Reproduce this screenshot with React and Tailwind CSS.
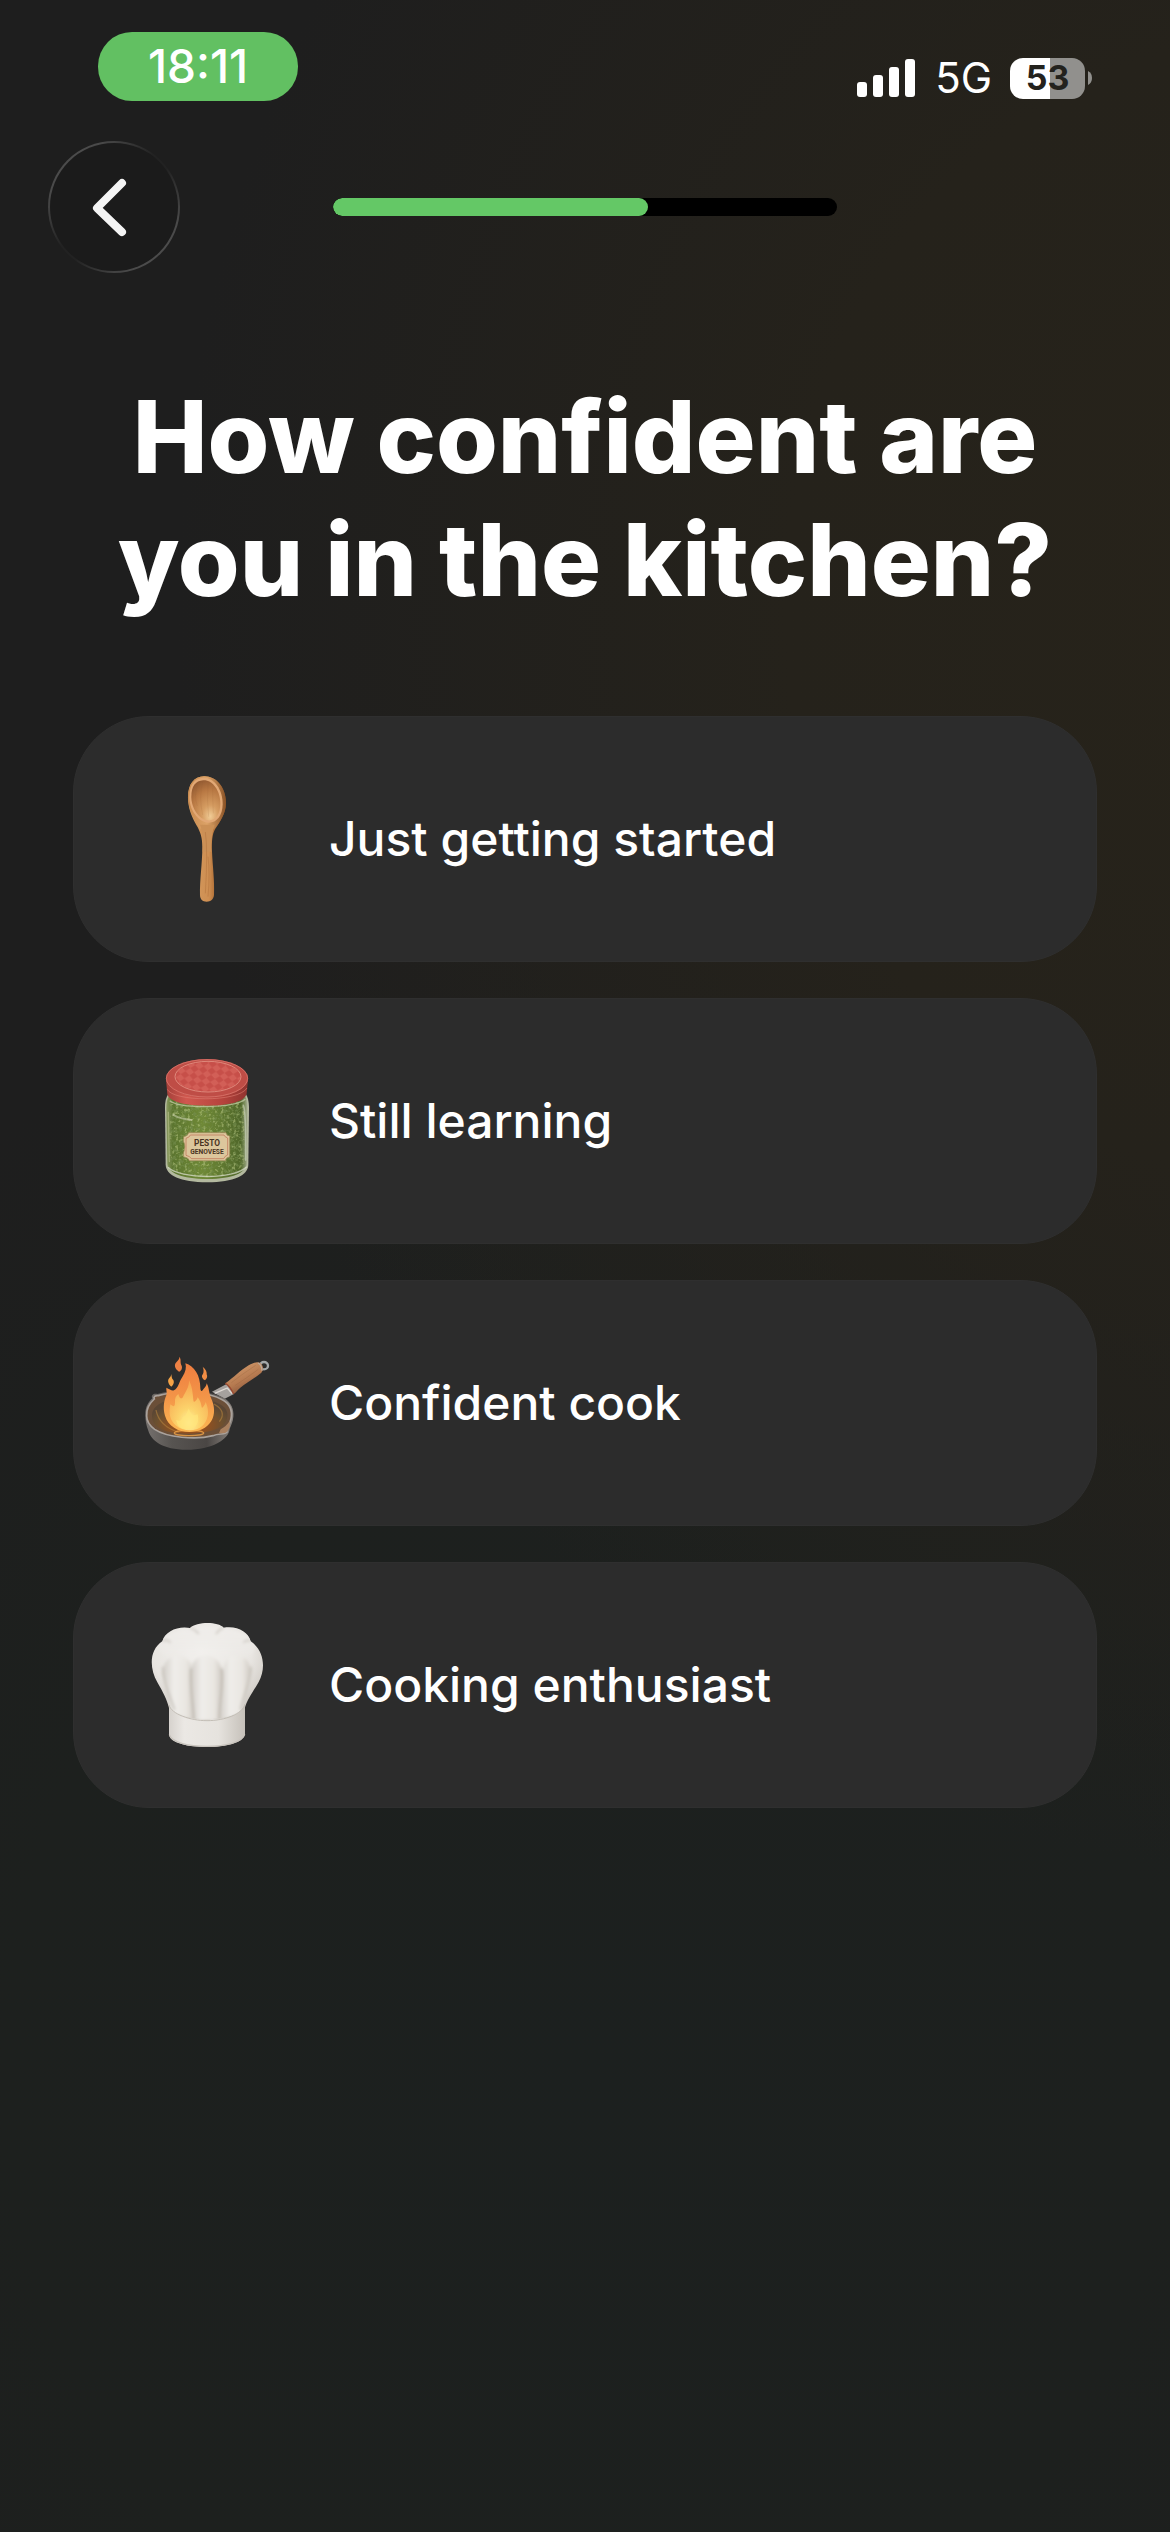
import React from "react";

function Spoon() {
  return (
    <svg viewBox="243 219 396 396" className="size-[132px] shrink-0" aria-hidden="true">
      <defs>
        <linearGradient id="sp-body" x1="0" x2="1">
          <stop offset="0" stopColor="#c98a4e" />
          <stop offset="0.5" stopColor="#dca368" />
          <stop offset="1" stopColor="#8a5226" />
        </linearGradient>
        <linearGradient id="sp-handle" x1="0" x2="1">
          <stop offset="0" stopColor="#d39a5f" />
          <stop offset="0.55" stopColor="#cf8f52" />
          <stop offset="0.75" stopColor="#a9672f" />
          <stop offset="1" stopColor="#7d471d" />
        </linearGradient>
        <radialGradient id="sp-bowl" cx="0.65" cy="0.9" r="0.95">
          <stop offset="0" stopColor="#f0cb95" />
          <stop offset="0.3" stopColor="#d59c61" />
          <stop offset="0.7" stopColor="#b87843" />
          <stop offset="1" stopColor="#935a31" />
        </radialGradient>
      </defs>
      <path d="M432 229C468 228 497 262 498 308C498 340 479 366 466 386C456 403 455 425 456 455C458 500 464 540 462 585C461 598 452 605 440 605C428 605 420 598 420 585C419 540 427 490 427 440C427 415 422 396 409 375C396 352 384 326 384 292C384 252 402 230 432 229Z" fill="url(#sp-handle)" />
      <path d="M432 229C468 228 497 262 498 308C498 340 479 366 464 386L420 386C404 366 384 326 384 292C384 252 402 230 432 229Z" fill="url(#sp-body)" />
      <path d="M420 374L464 374C455 400 453 425 454 455L428 455C429 425 429 396 420 374Z" fill="#cb9056" />
      <path d="M430 233C462 232 488 268 488 312C488 348 468 370 444 368C412 364 388 328 388 290C388 254 404 234 430 233Z" fill="#e2a875" />
      <path d="M430 241C458 240 481 272 481 312C481 343 465 363 444 361C416 358 394 324 394 290C394 260 406 242 430 241Z" fill="url(#sp-bowl)" />
      <path d="M414 250Q400 285 412 318M428 246Q416 290 428 345M444 250Q440 300 446 350M458 264Q458 300 460 340" stroke="#8f562e" strokeWidth="1.5" opacity="0.25" fill="none" />
      <path d="M436 396Q444 450 436 580M444 470Q450 520 444 590" stroke="#a3642f" strokeWidth="2" opacity="0.5" fill="none" />
    </svg>
  );
}

function PestoJar() {
  return (
    <svg viewBox="33 75 396 396" className="size-[132px] shrink-0" aria-hidden="true">
      <defs>
        <linearGradient id="jar-body" x1="0" x2="1">
          <stop offset="0" stopColor="#8b9a62" />
          <stop offset="0.08" stopColor="#5b752f" />
          <stop offset="0.45" stopColor="#6f8936" />
          <stop offset="0.92" stopColor="#4f672a" />
          <stop offset="1" stopColor="#a2ab8b" />
        </linearGradient>
        <linearGradient id="jar-rim" x1="0" x2="1">
          <stop offset="0" stopColor="#a5403a" />
          <stop offset="0.25" stopColor="#d0584f" />
          <stop offset="0.7" stopColor="#b5433c" />
          <stop offset="1" stopColor="#8f332f" />
        </linearGradient>
        <pattern id="jar-check" width="26" height="22" patternUnits="userSpaceOnUse" patternTransform="rotate(8)">
          <path d="M13 0L26 11L13 22L0 11Z" fill="#dd6f66" opacity="0.5" />
        </pattern>
        <filter id="jar-light">
          <feTurbulence type="fractalNoise" baseFrequency="0.11" numOctaves="2" seed="4" />
          <feColorMatrix values="0 0 0 0 0.56  0 0 0 0 0.65  0 0 0 0 0.27  5 0 0 0 -2.7" />
          <feComposite in2="SourceGraphic" operator="in" />
        </filter>
        <filter id="jar-dark">
          <feTurbulence type="fractalNoise" baseFrequency="0.1" numOctaves="2" seed="11" />
          <feColorMatrix values="0 0 0 0 0.18  0 0 0 0 0.27  0 0 0 0 0.08  0 5 0 0 -2.4" />
          <feComposite in2="SourceGraphic" operator="in" />
        </filter>
      </defs>
      <path d="M116 190C107 205 105 215 105 235L107 405C108 435 150 457 232 457C312 457 354 435 355 405L357 235C357 215 354 202 346 190Z" fill="#b3b99f" />
      <path d="M118 196C111 208 109 218 109 238L112 402C114 428 154 447 232 447C308 447 348 428 350 402L352 238C352 218 350 206 344 196Z" fill="url(#jar-body)" />
      <path d="M120 210L118 400C124 424 154 441 232 441C308 441 338 424 344 400L344 210Z" fill="#000" filter="url(#jar-dark)" opacity="0.6" />
      <path d="M120 210L118 400C124 424 154 441 232 441C308 441 338 424 344 400L344 210Z" fill="#000" filter="url(#jar-light)" opacity="0.45" />
      <path d="M119 212C150 236 310 236 346 208" stroke="#cdd3b0" strokeWidth="4" fill="none" opacity="0.7" />
      <path d="M130 254C145 266 166 266 184 270" stroke="#d7dcbd" strokeWidth="6" strokeLinecap="round" fill="none" opacity="0.5" />
      <path d="M340 226Q348 240 347 390" stroke="#d2d8c3" strokeWidth="5" strokeLinecap="round" fill="none" opacity="0.6" />
      <path d="M115 245L118 395" stroke="#bac28e" strokeWidth="4" fill="none" opacity="0.6" />
      <path d="M114 412C150 448 312 450 350 410" stroke="#dfe2d3" strokeWidth="4" fill="none" opacity="0.7" />
      <path d="M108 150L112 192C116 215 165 227 232 227C300 227 347 214 350 190L354 150Z" fill="url(#jar-rim)" />
      <path d="M112 178C128 215 325 218 351 174" stroke="#dd7d72" strokeWidth="3" fill="none" opacity="0.6" />
      <ellipse cx="231" cy="145" rx="123" ry="58" fill="#bf4d46" />
      <ellipse cx="231" cy="145" rx="122" ry="56" fill="none" stroke="#d9776d" strokeWidth="3" opacity="0.8" />
      <ellipse cx="234" cy="140" rx="99" ry="46" fill="#c74f49" stroke="#e39486" strokeWidth="2.5" />
      <ellipse cx="234" cy="140" rx="97" ry="44" fill="url(#jar-check)" />
      <path d="M176 308L288 308Q288 316 299 318L299 380Q287 382 286 392L178 392Q178 384 161 380L161 368Q168 347 161 335L161 320Q174 318 176 308Z" fill="#dcc69c" stroke="#a48b5c" strokeWidth="2" />
      <path d="M181 315L282 315Q284 321 293 324L293 375Q284 378 281 386L184 386Q181 379 168 376L168 325Q179 322 181 315Z" fill="none" stroke="#bd6950" strokeWidth="2" />
      <text x="231" y="349" textAnchor="middle" fontFamily="Roboto, sans-serif" fontWeight="700" fontSize="25" fill="#4a3423">PESTO</text>
      <text x="231" y="371" textAnchor="middle" fontFamily="Roboto, sans-serif" fontWeight="700" fontSize="20" fill="#4a3423">GENOVESE</text>
    </svg>
  );
}

function FlamingPan() {
  return (
    <svg viewBox="33 51 396 396" className="size-[132px] shrink-0" aria-hidden="true">
      <defs>
        <linearGradient id="pan-side" x1="0" x2="1">
          <stop offset="0" stopColor="#77726f" />
          <stop offset="0.3" stopColor="#575451" />
          <stop offset="0.7" stopColor="#4a4644" />
          <stop offset="1" stopColor="#8b8580" />
        </linearGradient>
        <radialGradient id="pan-oil" cx="0.5" cy="0.75" r="0.6">
          <stop offset="0" stopColor="#e27a25" />
          <stop offset="0.35" stopColor="#94501f" />
          <stop offset="0.75" stopColor="#6b5030" />
          <stop offset="1" stopColor="#5a4634" />
        </radialGradient>
        <linearGradient id="pan-wood" x1="0.3" y1="0.2" x2="0.7" y2="0.9">
          <stop offset="0" stopColor="#cb9264" />
          <stop offset="0.5" stopColor="#b67a50" />
          <stop offset="1" stopColor="#84533a" />
        </linearGradient>
        <linearGradient id="fl-outer" x1="0" y1="0" x2="0" y2="1">
          <stop offset="0" stopColor="#ef7d3f" />
          <stop offset="0.5" stopColor="#f39548" />
          <stop offset="1" stopColor="#fcb753" />
        </linearGradient>
        <radialGradient id="fl-inner" cx="0.5" cy="0.85" r="0.8">
          <stop offset="0" stopColor="#fff0a0" />
          <stop offset="0.35" stopColor="#fcd46c" />
          <stop offset="1" stopColor="#f6a650" />
        </radialGradient>
      </defs>
      <path d="M246 215L290 192L312 222L284 236Z" fill="#a5a19e" />
      <path d="M254 220L292 204L306 221" stroke="#ded9d4" strokeWidth="4" fill="none" />
      <ellipse cx="402" cy="137" rx="12" ry="11" fill="none" stroke="#a3a7a9" strokeWidth="7" />
      <path d="M286 190C310 174 332 150 356 136C370 128 383 124 392 130C400 139 402 149 394 158C376 174 350 188 330 204C322 211 317 219 311 222C304 208 296 196 286 190Z" fill="url(#pan-wood)" />
      <path d="M384 129Q395 134 396 152" stroke="#b9aca0" strokeWidth="4" fill="none" />
      <path d="M304 188Q340 160 377 136M316 196Q350 174 385 148" stroke="#8d5a39" strokeWidth="2" fill="none" opacity="0.4" />
      <path d="M286 190Q300 198 311 222" stroke="#9d4a30" strokeWidth="4" fill="none" />
      <path d="M46 285C45 260 57 245 67 235C62 225 72 219 82 222C140 204 240 210 282 234C304 247 312 269 310 290C309 304 303 316 299 326C297 358 246 389 170 389C98 389 63 361 55 332C48 315 46 300 46 285Z" fill="url(#pan-side)" />
      <path d="M50 288C48 261 63 246 73 237C69 230 76 226 85 227C140 211 238 216 277 239C301 252 307 275 303 296C299 316 286 329 291 336C285 345 267 339 249 347C196 361 110 352 74 328C58 316 50 302 50 288Z" fill="#6b4f38" stroke="#aaa29c" strokeWidth="5" />
      <path d="M66 288C66 260 92 240 152 234C210 229 264 242 285 264C297 280 294 300 281 314C250 345 118 352 84 322C70 312 66 300 66 288Z" fill="url(#pan-oil)" />
      <path d="M78 270Q87 318 146 337M252 252Q292 275 268 305" stroke="#b9873e" strokeWidth="4" fill="none" opacity="0.55" />
      <ellipse cx="177" cy="339" rx="44" ry="8" fill="none" stroke="#f2a548" strokeWidth="4" opacity="0.8" />
      <path d="M272 328Q290 318 299 303Q303 322 291 335Q284 341 267 339Z" fill="#a9805f" />
      <path d="M166 130C193 138 211 166 211 205C212 216 216 215 220 208C227 201 230 195 230 190C238 204 236 218 244 236C254 258 256 282 244 303C231 325 205 336 178 336C145 336 114 318 105 287C98 264 102 241 109 226C112 217 108 211 109 203C119 207 125 214 132 211C147 203 146 186 157 171C167 156 170 142 166 130Z" fill="url(#fl-outer)" />
      <path d="M177 181C187 200 188 220 190 240C191 252 200 242 203 232C213 244 213 254 216 264C223 258 225 253 227 246C241 276 233 304 216 319C196 337 157 334 137 316C119 301 116 279 121 253C131 262 135 260 135 246C134 235 138 228 145 222C148 234 153 240 159 231C166 216 178 202 177 181Z" fill="url(#fl-inner)" />
      <path d="M176 265C181 280 190 292 202 282C209 300 203 320 184 327C160 332 139 321 139 299C150 306 156 300 158 291C168 288 172 276 176 265Z" fill="#ffe67b" opacity="0.7" />
      <path d="M148 110C155 120 149 126 155 137C158 146 153 153 147 155C135 148 131 135 139 127C145 120 149 116 148 110Z" fill="#ee8144" />
      <path d="M123 161C126 169 124 174 130 180C134 188 129 196 124 200C115 193 111 181 118 174C122 169 124 166 123 161Z" fill="#f5a346" />
      <path d="M218 140C228 147 231 157 230 163C234 171 229 178 225 181C216 176 213 168 219 162C222 154 221 147 218 140Z" fill="#f18d45" />
    </svg>
  );
}

function ChefHat() {
  return (
    <svg viewBox="33 57 396 396" className="size-[132px] shrink-0" aria-hidden="true">
      <defs>
        <radialGradient id="hat-top" cx="0.45" cy="0.3" r="0.75">
          <stop offset="0" stopColor="#f3f1ee" />
          <stop offset="0.6" stopColor="#e8e5e1" />
          <stop offset="1" stopColor="#c4bfb8" />
        </radialGradient>
        <linearGradient id="hat-band" x1="0" x2="1">
          <stop offset="0" stopColor="#d6d2cd" />
          <stop offset="0.2" stopColor="#ebe8e4" />
          <stop offset="0.65" stopColor="#e6e3de" />
          <stop offset="1" stopColor="#c6c1ba" />
        </linearGradient>
        <linearGradient id="hat-fold" x1="0" x2="1">
          <stop offset="0" stopColor="#d3cfc9" />
          <stop offset="0.35" stopColor="#efedea" />
          <stop offset="0.75" stopColor="#e9e6e1" />
          <stop offset="1" stopColor="#d2cdc6" />
        </linearGradient>
        <linearGradient id="hat-fade" x1="0" y1="0" x2="0" y2="1">
          <stop offset="0" stopColor="#efedea" />
          <stop offset="1" stopColor="#efedea" stopOpacity="0" />
        </linearGradient>
        <filter id="hat-soft" x="-20%" y="-20%" width="140%" height="140%">
          <feGaussianBlur stdDeviation="5" />
        </filter>
        <clipPath id="hat-clip">
          <path d="M118 328C112 300 98 275 82 247C58 205 57 150 97 124C105 93 145 77 180 84C200 64 265 64 281 83C320 76 355 94 362 124C402 150 409 205 386 246C370 274 350 300 344 326C320 365 150 370 118 328Z" />
        </clipPath>
      </defs>
      <path d="M117 312L117 405C122 430 175 441 231 441C289 441 340 428 345 403L345 310Z" fill="url(#hat-band)" />
      <path d="M118 328C112 300 98 275 82 247C58 205 57 150 97 124C105 93 145 77 180 84C200 64 265 64 281 83C320 76 355 94 362 124C402 150 409 205 386 246C370 274 350 300 344 326C320 365 150 370 118 328Z" fill="url(#hat-top)" />
      <g clipPath="url(#hat-clip)">
        <g filter="url(#hat-soft)">
          <path d="M100 205C106 165 160 150 182 190C188 235 184 310 192 362L120 340C124 300 96 250 100 205Z" fill="url(#hat-fold)" />
          <path d="M360 200C350 160 300 150 284 192C272 240 276 310 268 362L340 340C340 290 364 250 360 200Z" fill="url(#hat-fold)" />
          <path d="M184 205C190 155 264 155 274 205C278 255 268 310 266 362L192 362C190 300 180 255 184 205Z" fill="url(#hat-fold)" />
          <path d="M98 200C96 240 118 280 134 330" stroke="#c4bfb7" strokeWidth="5" fill="none" />
          <path d="M183 205C178 260 190 310 192 362" stroke="#bfb9b0" strokeWidth="6" fill="none" />
          <path d="M275 205C282 260 266 310 268 362" stroke="#bfb9b0" strokeWidth="6" fill="none" />
          <path d="M363 200C364 240 340 280 332 330" stroke="#c4bfb7" strokeWidth="5" fill="none" />
          <ellipse cx="231" cy="140" rx="145" ry="60" fill="url(#hat-fade)" />
          <path d="M97 124Q112 115 122 128M180 84Q196 88 206 102M281 83Q266 88 258 102M362 124Q350 116 340 128" stroke="#cdc8c1" strokeWidth="5" fill="none" />
        </g>
      </g>
      <path d="M117 315C124 342 180 362 231 362C285 362 338 342 345 312L345 345C325 365 140 370 117 345Z" fill="url(#hat-band)" />
      <path d="M117 315C124 342 180 362 231 362C285 362 338 342 345 312" fill="none" stroke="#c3beb6" strokeWidth="3" />
      <path d="M118 404C126 429 178 439 231 439C287 439 338 427 344 402" fill="none" stroke="#c8c3bc" strokeWidth="4" />
    </svg>
  );
}

function StatusBar() {
  return (
    <div className="flex items-start justify-between pt-8 pr-[78px] pl-[98px]">
      <div className="flex h-[69px] w-[200px] items-center justify-center rounded-[34px] bg-[#62c062] text-[46px] font-medium">
        18:11
      </div>
      <div className="flex items-center pt-6">
        <svg viewBox="0 0 58 38" className="mr-5 h-[38px] w-[58px]" fill="#fff" aria-hidden="true">
          <rect x="0" y="23" width="10" height="15" rx="3" />
          <rect x="16" y="16" width="10" height="22" rx="3" />
          <rect x="32" y="8" width="10" height="30" rx="3" />
          <rect x="48" y="0" width="10" height="38" rx="3" />
        </svg>
        <span className="mr-[18px] text-[42px] leading-[44px]">5G</span>
        <div className="flex h-[41px] w-[75px] items-center justify-center rounded-[13px] bg-[linear-gradient(90deg,#fff_54%,#91908d_54%)] text-[34px] leading-none font-bold text-[#23221d]">
          53
        </div>
        <svg viewBox="0 0 4 14" className="ml-[3px] h-[14px] w-1" fill="#91908d" aria-hidden="true">
          <path d="M0 0Q4 2 4 7T0 14Z" />
        </svg>
      </div>
    </div>
  );
}

const options = [
  { label: "Just getting started", Icon: Spoon },
  { label: "Still learning", Icon: PestoJar },
  { label: "Confident cook", Icon: FlamingPan },
  { label: "Cooking enthusiast", Icon: ChefHat },
];

export default function App() {
  return (
    <div className="min-h-screen bg-[#1e1e1e] bg-[radial-gradient(ellipse_95%_50%_at_110%_24%,#27231a_0%,#25221b_45%,transparent_100%),radial-gradient(ellipse_90%_45%_at_50%_82%,#1c201f_0%,#1d201e_55%,transparent_100%)] font-['Inter',sans-serif] text-white">
      <StatusBar />
      <header className="mt-10 grid grid-cols-[132px_1fr_132px] items-center px-12">
        <button
          type="button"
          aria-label="Back"
          className="size-[132px] rounded-full bg-[linear-gradient(135deg,#505050,#4a4a4a_20%,#222_45%,#222_55%,#4a4a4a_80%,#505050)] p-[2px]"
        >
          <span className="flex size-full items-center justify-center rounded-full bg-[#1b1b1b]">
            <svg viewBox="0 0 40 60" className="mr-2 h-[60px] w-10" fill="none" stroke="#f4f4f4" strokeWidth="8" strokeLinecap="round" strokeLinejoin="round" aria-hidden="true">
              <path d="M32 6L7 31L32 55" />
            </svg>
          </span>
        </button>
        <div
          role="progressbar"
          aria-label="Onboarding progress"
          aria-valuenow={62}
          aria-valuemin={0}
          aria-valuemax={100}
          className="h-[18px] w-full max-w-[504px] justify-self-center overflow-hidden rounded-full bg-black"
        >
          <div className="h-full w-5/8 rounded-full bg-[#64c866]" />
        </div>
      </header>
      <main className="px-[73px] pt-[102px] pb-12">
        <h1 className="text-center text-[100px] leading-[123px] font-extrabold">
          How confident are
          <br />
          you in the kitchen?
        </h1>
        <div className="mt-[95px] flex flex-col gap-9">
          {options.map(({ label, Icon }) => (
            <button
              key={label}
              type="button"
              className="flex h-[246px] w-full items-center gap-14 rounded-[76px] border border-[#2f2f2f] bg-[#2c2c2c] px-[67px] text-left text-[48px] leading-[60px] font-medium"
            >
              <Icon />
              <span>{label}</span>
            </button>
          ))}
        </div>
      </main>
    </div>
  );
}
